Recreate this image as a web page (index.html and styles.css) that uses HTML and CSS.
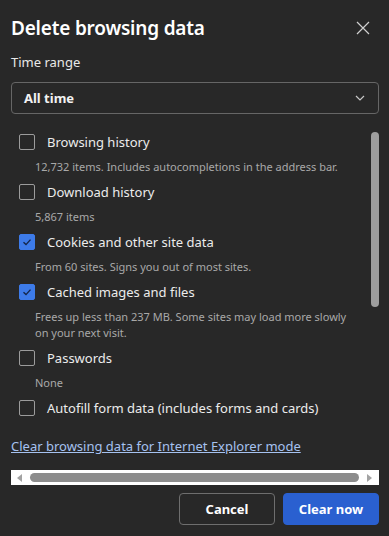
FILE: index.html
```html
<!DOCTYPE html>
<html lang="en">
<head>
<meta charset="utf-8">
<title>Delete browsing data</title>
<link rel="stylesheet" href="styles.css">
</head>
<body>
<div class="dialog">
  <div class="header">
    <h1 class="title">Delete browsing data</h1>
    <button class="close" aria-label="Close">
      <svg width="14" height="14" viewBox="0 0 14 14"><path d="M1 1L13 13M13 1L1 13" stroke="#d0d0d0" stroke-width="1.2" fill="none"/></svg>
    </button>
  </div>
  <div class="range-label">Time range</div>
  <div class="select">
    <span class="select-value">All time</span>
    <svg class="chev" width="10" height="6" viewBox="0 0 10 6"><path d="M1 1L5 5L9 1" stroke="#c8c8c8" stroke-width="1.2" fill="none"/></svg>
  </div>
  <div class="list">
    <div class="items">
      <div class="item">
        <div class="row"><span class="box"></span><span class="label">Browsing history</span></div>
        <div class="sub">12,732 items. Includes autocompletions in the address bar.</div>
      </div>
      <div class="item">
        <div class="row"><span class="box"></span><span class="label">Download history</span></div>
        <div class="sub">5,867 items</div>
      </div>
      <div class="item">
        <div class="row"><span class="box checked"><svg width="16" height="16" viewBox="0 0 16 16"><path d="M4.5 8.2L7 10.6L11.5 5.6" stroke="#14264a" stroke-width="1.4" fill="none"/></svg></span><span class="label">Cookies and other site data</span></div>
        <div class="sub">From 60 sites. Signs you out of most sites.</div>
      </div>
      <div class="item">
        <div class="row"><span class="box checked"><svg width="16" height="16" viewBox="0 0 16 16"><path d="M4.5 8.2L7 10.6L11.5 5.6" stroke="#14264a" stroke-width="1.4" fill="none"/></svg></span><span class="label">Cached images and files</span></div>
        <div class="sub">Frees up less than 237 MB. Some sites may load more slowly on your next visit.</div>
      </div>
      <div class="item">
        <div class="row"><span class="box"></span><span class="label">Passwords</span></div>
        <div class="sub">None</div>
      </div>
      <div class="item">
        <div class="row"><span class="box"></span><span class="label">Autofill form data (includes forms and cards)</span></div>
      </div>
    </div>
    <div class="vscroll"><div class="vthumb"></div></div>
  </div>
  <a class="link" href="#">Clear browsing data for Internet Explorer mode</a>
  <div class="hscroll">
    <svg class="harrow" width="6" height="8" viewBox="0 0 6 8"><path d="M5 0L0 4L5 8Z" fill="#a3a3a3"/></svg>
    <div class="hthumb"></div>
    <svg class="harrow" width="6" height="8" viewBox="0 0 6 8"><path d="M1 0L6 4L1 8Z" fill="#a3a3a3"/></svg>
  </div>
  <div class="actions">
    <button class="btn cancel">Cancel</button>
    <button class="btn primary">Clear now</button>
  </div>
</div>
</body>
</html>
```
FILE: styles.css
```css
html, body {
  margin: 0;
  padding: 0;
  background: #282828;
}
body {
  font-family: "Noto Sans", "Open Sans", sans-serif;
  color: #e8e8e8;
  width: 389px;
  height: 536px;
  overflow: hidden;
}
.dialog {
  padding: 0 10px 0 11px;
  display: flex;
  flex-direction: column;
}
.header {
  display: flex;
  align-items: center;
  justify-content: space-between;
  padding-top: 16px;
  height: 24px;
  margin-bottom: 12px;
}
.title {
  margin: 0;
  font-size: 19px;
  font-weight: 600;
  line-height: 24px;
  color: #ffffff;
  letter-spacing: -0.2px;
}
.close {
  background: none;
  border: 0;
  padding: 0;
  margin-right: 9px;
  width: 14px;
  height: 14px;
  display: flex;
}
.range-label {
  font-size: 13px;
  line-height: 20px;
  color: #e8e8e8;
  margin-bottom: 10px;
}
.select {
  height: 32px;
  box-sizing: border-box;
  border: 1px solid #666666;
  border-radius: 4px;
  padding: 0 13px 0 12px;
  display: flex;
  align-items: center;
  justify-content: space-between;
}
.select-value {
  font-size: 13px;
  font-weight: 700;
  color: #f2f2f2;
}
.list {
  display: flex;
  height: 311px;
  overflow: hidden;
  margin-top: 0;
}
.items {
  flex: 1;
  padding: 18px 0 0 8px;
}
.item {
  padding-bottom: 7px;
}
.row {
  display: flex;
  align-items: center;
  gap: 12px;
  height: 20px;
}
.box {
  width: 16px;
  height: 16px;
  box-sizing: border-box;
  border: 1px solid #9c9c9c;
  border-radius: 2px;
  flex: none;
  display: flex;
}
.box.checked {
  background: #3d7be9;
  border-color: #3d7be9;
}
.box.checked svg {
  margin: -1px;
}
.label {
  font-size: 13px;
  color: #ececec;
  white-space: nowrap;
}
.sub {
  margin: 7px 0 0 16px;
  font-size: 11px;
  line-height: 16px;
  color: #a8a8a8;
  padding-right: 18px;
}
.vscroll {
  width: 8px;
  padding-top: 18px;
}
.vthumb {
  height: 175px;
  background: #9e9e9e;
  border-radius: 4px;
}
.link {
  margin-top: 11px;
  font-size: 13px;
  line-height: 20px;
  color: #a6c2f0;
  text-decoration: underline;
  align-self: flex-start;
}
.hscroll {
  margin-top: 14px;
  height: 15px;
  background: #ffffff;
  display: flex;
  align-items: center;
  padding: 0 7px 0 6px;
  gap: 7px;
}
.hthumb {
  flex: 1;
  height: 9px;
  background: #8c8c8c;
  border-radius: 5px;
}
.actions {
  margin-top: 8px;
  display: flex;
  justify-content: flex-end;
  gap: 8px;
}
.btn {
  width: 96px;
  height: 32px;
  border-radius: 4px;
  font-family: inherit;
  font-size: 13px;
  font-weight: 700;
  color: #ffffff;
  padding: 0;
}
.cancel {
  background: transparent;
  border: 1px solid #6e6e6e;
}
.primary {
  background: #2a60d0;
  border: 1px solid #2a60d0;
}
```
